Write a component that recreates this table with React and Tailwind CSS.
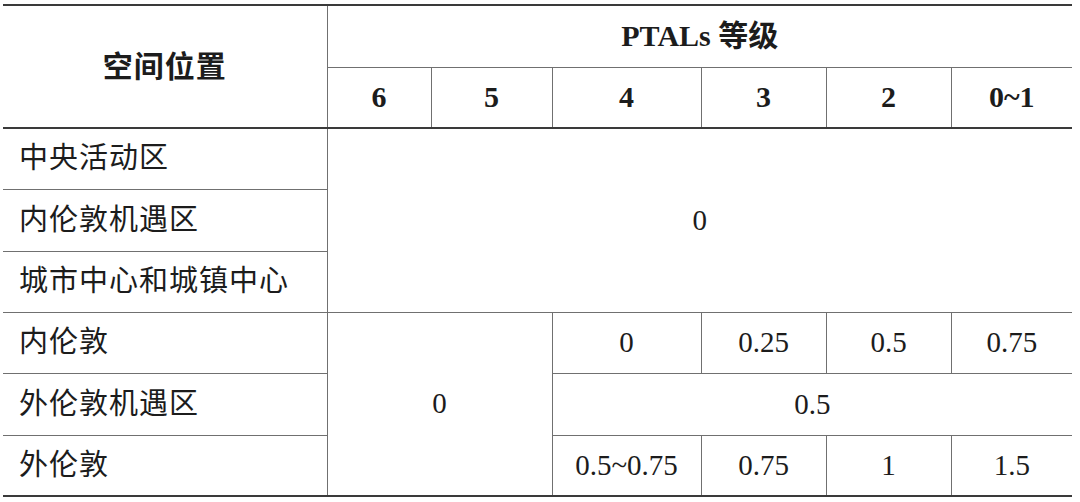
export default function App() {
  const td = "border border-[#707070] text-center align-middle p-0";
  const firstCol = "border-y border-r border-[#707070] text-left align-middle pl-[16px] tracking-[1px]";
  return (
    <div className="w-[1080px] h-[502px] bg-white pt-[4px] pl-[3px] font-['Liberation_Serif','Noto_Sans_CJK_SC',serif] text-[#1c1c1c]">
      <table className="w-[1069px] border-collapse table-fixed text-[29px] leading-none">
        <colgroup>
          <col className="w-[324px]" />
          <col className="w-[104px]" />
          <col className="w-[121px]" />
          <col className="w-[149px]" />
          <col className="w-[125px]" />
          <col className="w-[125px]" />
          <col className="w-[121px]" />
        </colgroup>
        <thead>
          <tr className="h-[62px]">
            <th
              rowSpan={2}
              className="border-t-2 border-b-2 border-r border-t-[#3a3a3a] border-b-[#3a3a3a] border-r-[#707070] text-center align-middle font-bold tracking-[1px] text-[30px]"
            >
              空间位置
            </th>
            <th
              colSpan={6}
              className="border-t-2 border-t-[#3a3a3a] border-b border-b-[#707070] border-l border-l-[#707070] text-center align-middle font-bold text-[30px]"
            >
              PTALs 等级
            </th>
          </tr>
          <tr className="h-[61px]">
            {["6", "5", "4", "3", "2", "0~1"].map((h, i) => (
              <th
                key={h}
                className={`border-b-2 border-b-[#3a3a3a] border-t border-t-[#707070] ${i < 5 ? "border-r border-r-[#707070]" : ""} border-l border-l-[#707070] text-center align-middle font-bold text-[30px]`}
              >
                {h}
              </th>
            ))}
          </tr>
        </thead>
        <tbody>
          <tr className="h-[61px]">
            <td className={firstCol}>中央活动区</td>
            <td colSpan={6} rowSpan={3} className={td + " border-r-0"}>0</td>
          </tr>
          <tr className="h-[62px]">
            <td className={firstCol}>内伦敦机遇区</td>
          </tr>
          <tr className="h-[61px]">
            <td className={firstCol}>城市中心和城镇中心</td>
          </tr>
          <tr className="h-[61px]">
            <td className={firstCol}>内伦敦</td>
            <td colSpan={2} rowSpan={3} className={td + " border-b-2 border-b-[#3a3a3a]"}>0</td>
            <td className={td}>0</td>
            <td className={td}>0.25</td>
            <td className={td}>0.5</td>
            <td className={td + " border-r-0"}>0.75</td>
          </tr>
          <tr className="h-[62px]">
            <td className={firstCol}>外伦敦机遇区</td>
            <td colSpan={4} className={td + " border-r-0"}>0.5</td>
          </tr>
          <tr className="h-[61px]">
            <td className={firstCol + " border-b-2 border-b-[#3a3a3a]"}>外伦敦</td>
            <td className={td + " border-b-2 border-b-[#3a3a3a]"}>0.5~0.75</td>
            <td className={td + " border-b-2 border-b-[#3a3a3a]"}>0.75</td>
            <td className={td + " border-b-2 border-b-[#3a3a3a]"}>1</td>
            <td className={td + " border-b-2 border-b-[#3a3a3a] border-r-0"}>1.5</td>
          </tr>
        </tbody>
      </table>
    </div>
  );
}
